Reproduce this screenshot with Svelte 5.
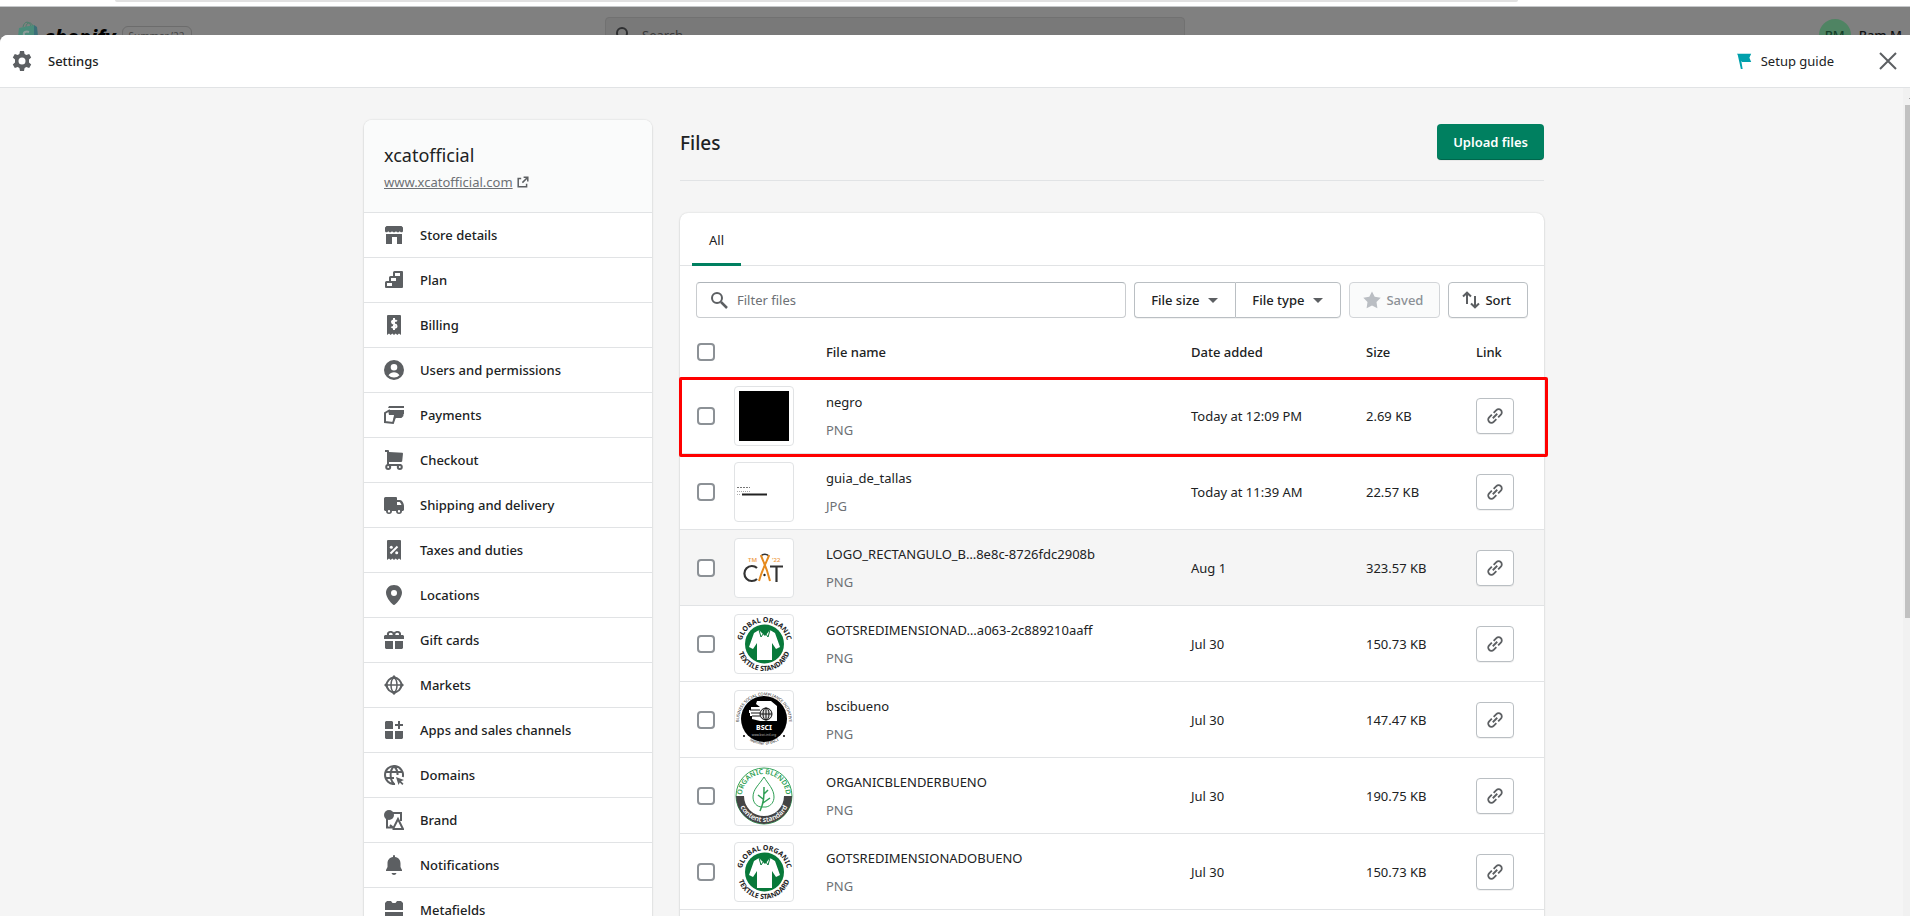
<script lang="ts">
  type NavItem = { label: string; icon: string };
  type FileRow = {
    name: string;
    type: string;
    date: string;
    size: string;
    thumb: string;
    highlighted?: boolean;
    hovered?: boolean;
  };

  const navItems: NavItem[] = [
    { label: 'Store details', icon: 'store' },
    { label: 'Plan', icon: 'plan' },
    { label: 'Billing', icon: 'billing' },
    { label: 'Users and permissions', icon: 'user' },
    { label: 'Payments', icon: 'payments' },
    { label: 'Checkout', icon: 'cart' },
    { label: 'Shipping and delivery', icon: 'truck' },
    { label: 'Taxes and duties', icon: 'taxes' },
    { label: 'Locations', icon: 'pin' },
    { label: 'Gift cards', icon: 'gift' },
    { label: 'Markets', icon: 'markets' },
    { label: 'Apps and sales channels', icon: 'apps' },
    { label: 'Domains', icon: 'domains' },
    { label: 'Brand', icon: 'brand' },
    { label: 'Notifications', icon: 'bell' },
    { label: 'Metafields', icon: 'metafields' }
  ];

  const files: FileRow[] = [
    { name: 'negro', type: 'PNG', date: 'Today at 12:09 PM', size: '2.69 KB', thumb: 'black', highlighted: true },
    { name: 'guia_de_tallas', type: 'JPG', date: 'Today at 11:39 AM', size: '22.57 KB', thumb: 'guide' },
    { name: 'LOGO_RECTANGULO_B…8e8c-8726fdc2908b', type: 'PNG', date: 'Aug 1', size: '323.57 KB', thumb: 'cat', hovered: true },
    { name: 'GOTSREDIMENSIONAD…a063-2c889210aaff', type: 'PNG', date: 'Jul 30', size: '150.73 KB', thumb: 'gots' },
    { name: 'bscibueno', type: 'PNG', date: 'Jul 30', size: '147.47 KB', thumb: 'bsci' },
    { name: 'ORGANICBLENDERBUENO', type: 'PNG', date: 'Jul 30', size: '190.75 KB', thumb: 'organic' },
    { name: 'GOTSREDIMENSIONADOBUENO', type: 'PNG', date: 'Jul 30', size: '150.73 KB', thumb: 'gots' }
  ];

  let filter = $state('');
  let selected: boolean[] = $state(files.map(() => false));
  let allSelected = $derived(selected.every(Boolean));

  function toggleAll() {
    const next = !allSelected;
    selected = files.map(() => next);
  }
</script>

{#snippet icon(name: string)}
  <svg class="icon" viewBox="0 0 20 20" aria-hidden="true">
    {#if name === 'store'}
      <path d="M2.5 1h15l1.500 1.500v3.200c0 .9-.7 1.600-1.500 1.600s-1.500-.6-1.700-1.300c-.2.700-.9 1.300-1.900 1.300s-1.700-.6-1.900-1.300c-.2.700-1 1.300-2 1.300s-1.800-.6-2-1.300c-.2.700-.9 1.300-1.900 1.300s-1.700-.6-1.900-1.300c-.2.700-.9 1.300-1.700 1.300S1 6.600 1 5.700V2.500z" />
      <path d="M2 9h16v10h-5v-7H8v7H2z" />
    {:else if name === 'plan'}
      <path fill-rule="evenodd" d="M10.500 1H18a1 1 0 0 1 1 1v15a1 1 0 0 1-1 1H2a1 1 0 0 1-1-1v-4.500a1.500 1.500 0 0 1 1.500-1.500H5V7.500A1.500 1.500 0 0 1 6.500 6H9V2.500A1.500 1.500 0 0 1 10.500 1zM11 3v3h5V3zM7 8v3h5V8zM3 13v3h5v-3z" />
    {:else if name === 'billing'}
      <path fill-rule="evenodd" d="M3 1a1 1 0 0 1 1-1h12a1 1 0 0 1 1 1v19l-2-1.500-1.700 1.500-1.600-1.500L10 20l-1.700-1.500L6.700 20 5 18.500 3 20z" />
      <path class="stroke-white" d="M12.800 6.300C12 5.300 8 4.700 8 7s4.500 1.600 4.500 4-4 2-5 .7M10 3v12" />
    {:else if name === 'user'}
      <path fill-rule="evenodd" d="M10 0a10 10 0 1 0 0 20 10 10 0 0 0 0-20zM10 4a3.300 3.300 0 1 1 0 6.600A3.300 3.300 0 0 1 10 4zM4.500 15.300C5.800 13.400 7.800 12.300 10 12.300s4.200 1.100 5.500 3A7.500 7.500 0 0 1 10 17.500a7.500 7.500 0 0 1-5.500-2.200z" />
    {:else if name === 'payments'}
      <path d="M5 1h15v2H4zM4 5h16v4l-3 3h-5l-2 4H9l1-6H5z" />
      <path class="stroke" d="M6 5 1 8v9l8 1 2-6h6l2-2" />
    {:else if name === 'cart'}
      <path d="M1 0h3a1 1 0 0 1 1 1v1l13.500.7.500.8-.8 7.700-.8.800H5v2h12v2H4a1 1 0 0 1-1-1V2H1z" />
      <circle class="stroke" cx="4.200" cy="17" r="2" />
      <circle class="stroke" cx="15.800" cy="17" r="2" />
    {:else if name === 'truck'}
      <path fill-rule="evenodd" d="M1.500 2h10.500a1 1 0 0 1 1 1v2h3c2 0 4 3.500 4 6v4l-1 1h-1a3 3 0 0 1-6 0H8a3 3 0 0 1-6 0H1l-1-1V3.500A1.500 1.500 0 0 1 1.500 2zM13 7v3h4.500C17 8.500 16 7 15.500 7zM5 15a1.200 1.200 0 1 0 0 2.400A1.200 1.200 0 0 0 5 15zm10 0a1.200 1.200 0 1 0 0 2.400 1.200 1.200 0 0 0 0-2.400z" />
    {:else if name === 'taxes'}
      <path d="M3 1a1 1 0 0 1 1-1h12a1 1 0 0 1 1 1v19l-2-1.500-1.700 1.500-1.600-1.500L10 20l-1.700-1.500L6.700 20 5 18.500 3 20z" />
      <path class="stroke-white" d="m6.500 13.500 7-7" />
      <circle class="white" cx="7.300" cy="7.300" r="1.500" />
      <circle class="white" cx="12.700" cy="12.700" r="1.500" />
    {:else if name === 'pin'}
      <path fill-rule="evenodd" d="M10 0C5.300 0 2 3.400 2 7.800 2 13 8.500 20 10 20s8-7 8-12.200C18 3.400 14.700 0 10 0zm0 5a3 3 0 1 1 0 6 3 3 0 0 1 0-6z" />
    {:else if name === 'gift'}
      <path fill-rule="evenodd" d="M3 5C2.500 2 4.500 1 6.500 1c1.500 0 2.700.5 3.500 1.500C10.800 1.500 12 1 13.500 1c2 0 4 1 3.500 4h2l1 1v3H0V6l1-1zm2 0h3.700C8.700 3.500 8 2.700 6.700 2.700S4.800 3.600 5 5zm6.300 0H15c.2-1.400-.4-2.300-1.700-2.300s-2 .8-2 2.300zM1 11h8v8H2l-1-1zm10 0h8v7l-1 1h-7z" />
    {:else if name === 'markets'}
      <path d="m10 0 3 3H7zM20 10l-3-3v6zM10 20l3-3H7zM0 10l3-3v6z" />
      <circle class="stroke" cx="10" cy="10" r="7.300" />
      <ellipse class="stroke thin" cx="10" cy="10" rx="3" ry="7" />
      <path class="stroke thin" d="M2 10h16" />
    {:else if name === 'apps'}
      <path d="M2 1h6l1 1v7H1V2zM1 11h8v8H2l-1-1zM11 11h8v7l-1 1h-7zM14 1h2v3h3v2h-3v3h-2V6h-3V4h3z" />
    {:else if name === 'domains'}
      <path class="stroke" d="M18.800 12A9 9 0 1 0 11 19M1.500 7h17M1.500 13H10M10 1C5.500 5.500 5.500 14.500 10 19M10 1c2.500 2.500 3.800 6 3.500 9" />
      <path d="m12 12 8 3-3 1.300 2.500 2.500-1.200 1.200-2.500-2.500L14.500 20z" />
    {:else if name === 'brand'}
      <circle cx="5" cy="5" r="5" />
      <path class="stroke" d="M9 3h8v8M3 9v8.500h6M8.500 19H19l-5-10-4.500 9L6 15" />
    {:else if name === 'bell'}
      <path d="M10 0a1 1 0 0 1 1 1v1c3.500.5 5.500 3 5.500 6.500V12l1.500 3v1H2v-1l1.500-3V8.500C3.500 5 5.500 2.500 9 2V1a1 1 0 0 1 1-1zM7.500 18h5c-.4 1.300-1.300 2-2.500 2s-2.100-.7-2.500-2z" />
    {:else if name === 'metafields'}
      <path d="M1 3 3 1h4l1.500 2h3L13 1h4l2 2v7H1zM1 12h18v7H1z" />
    {:else if name === 'gear'}
      <path fill-rule="evenodd" d="M8 0h4l.6 3 1.700 1 2.900-1.100 2 3.500L17 8.500v3l2.200 2.100-2 3.500-2.900-1.100-1.700 1L12 20H8l-.6-3-1.700-1-2.900 1.100-2-3.500L3 11.500v-3L.8 6.400l2-3.500L5.700 4l1.700-1zm2 6.500a3.500 3.500 0 1 0 0 7 3.500 3.500 0 0 0 0-7z" />
    {:else if name === 'flag'}
      <path d="M2 2h16l-2 4.500L18 11H8l-1-1 1.500 9h-2L3 3z" />
    {:else if name === 'close'}
      <path class="stroke" d="m2 2 16 16M18 2 2 18" />
    {:else if name === 'search'}
      <circle class="stroke" cx="8" cy="8" r="5" />
      <path class="stroke bold" d="m12 12 6 6" />
    {:else if name === 'external'}
      <path class="stroke bold" d="M7 4H2v14h14v-5M11 2h7v7M18 2 9 11" />
    {:else if name === 'caret'}
      <path d="M5 8h10l-5 5z" />
    {:else if name === 'star'}
      <path d="m10 1.500 2.700 5.300 6 1-4.200 4.300.9 6.200L10 15.500l-5.400 2.800.9-6.200L1.300 7.800l6-1z" />
    {:else if name === 'sort'}
      <path class="stroke" d="M6 14V3M2 6.500 6 2.700l4 3.800M14 6v11M10 13.500l4 3.800 4-3.800" />
    {:else if name === 'link'}
      <path class="stroke" d="m7.500 12.500 5-5M8.500 6.500l3-3a3.500 3.500 0 0 1 5 5l-3 3M11.500 13.500l-3 3a3.500 3.500 0 0 1-5-5l3-3" />
    {/if}
  </svg>
{/snippet}

{#snippet thumbnail(kind: string, id: number)}
  <svg class="art" viewBox="0 0 58 58" aria-hidden="true">
    {#if kind === 'black'}
      <rect x="4" y="4" width="50" height="50" />
    {:else if kind === 'guide'}
      <path stroke="#777" stroke-width="1" stroke-dasharray="2 1" d="M2 24.500h13" />
      <path stroke="#aaa" stroke-width="1" stroke-dasharray="1 1" d="M2 28.500h14M2 31.500h4" />
      <path stroke="#222" stroke-width="2" d="M7 31.500h25" />
    {:else if kind === 'cat'}
      <g fill="none" stroke="#333" stroke-width="2.200">
        <path d="M22 29a7.500 7.500 0 1 0 0 11M35 27.500h13M41.500 27.500V43" />
        <path d="M26 17.500c1.500-3 6.500-3 8 0" stroke-width="1.500" />
      </g>
      <path fill="none" stroke="#e58a1f" stroke-width="2" d="M26 16c1 5 5 9 9 26M34 16c-1 5-5 9-10 26" />
      <circle cx="29.500" cy="36" r="1.200" fill="#222" />
      <text x="13" y="23" font-size="6" font-weight="600" fill="#efa04d">TM</text>
      <text x="37" y="23" font-size="6" font-weight="600" fill="#efa04d">'22</text>
    {:else if kind === 'gots'}
      <path id="gots-top-{id}" fill="none" d="M7 35a23 23 0 1 1 45 0" />
      <path id="gots-bottom-{id}" fill="none" d="M2 29a27 27 0 0 0 54 0" />
      <circle cx="29.500" cy="29" r="19.500" fill="#08793a" />
      <path fill="#fff" d="m24 15-5 3-5 14 4 2 4-6v17h15V28l4 6 4-2-5-14-5-3-5 6z" />
      <path fill="none" stroke="#08793a" d="m24 15 2 7 3.500-5 3.500 5 2-7" />
      <g class="ring">
        <text><textPath href="#gots-top-{id}" startOffset="50%">GLOBAL ORGANIC</textPath></text>
        <text><textPath href="#gots-bottom-{id}" startOffset="50%">TEXTILE STANDARD</textPath></text>
      </g>
    {:else if kind === 'bsci'}
      <path id="bsci-top-{id}" fill="none" d="M8 43a25 25 0 1 1 42 0" />
      <path id="bsci-bottom-{id}" fill="none" d="M5 39a27 27 0 0 0 48 0" />
      <circle cx="29" cy="28" r="23" />
      <path fill="#fff" d="M22 10h14l6 5v15H25l-8-2v-3h-2v-3h-1v-3h2v-3h9l-4-3z" />
      <g fill="none" stroke="#111" stroke-width="1">
        <circle cx="31" cy="23" r="6" fill="#ddd" />
        <ellipse cx="31" cy="23" rx="3" ry="6" />
        <path d="M25 23h12M31 17v12M15 19h10M16 22h9M17 25h8" />
      </g>
      <text x="29" y="39" text-anchor="middle" font-size="7" font-weight="800" fill="#fff">BSCI</text>
      <text x="29" y="45" text-anchor="middle" font-size="3" fill="#bbb">www.bsci-intl.org</text>
      <g class="ring small">
        <text><textPath href="#bsci-top-{id}" startOffset="50%">BUSINESS SOCIAL COMPLIANCE INITIATIVE</textPath></text>
        <text><textPath href="#bsci-bottom-{id}" startOffset="50%">Member of BSCI</textPath></text>
      </g>
      <circle cx="9" cy="45" r="1" />
      <circle cx="49" cy="45" r="1" />
    {:else if kind === 'organic'}
      <path id="organic-top-{id}" fill="none" d="M7 29a22 22 0 0 1 44 0" />
      <path id="organic-bottom-{id}" fill="none" d="M3 29a26 26 0 0 0 52 0" />
      <circle cx="29" cy="29" r="28" fill="none" stroke="#35a35a" />
      <path fill="#444" d="M1 29a28 28 0 0 0 56 0h-8a20 20 0 0 1-40 0z" />
      <path fill="none" stroke="#2f9f55" d="M29 10c-5 8-11 12-11 20 0 6 4 10 9 10h4c5-1 8-5 8-10 0-8-6-13-10-20z" />
      <path fill="none" stroke="#2f9f55" stroke-width="1.500" d="M29 20c0 10 0 15-4 24M28 32l-5-4M28 36l7-5M29 27l4-4" />
      <g class="ring green">
        <text><textPath href="#organic-top-{id}" startOffset="50%">ORGANIC BLENDED</textPath></text>
      </g>
      <g class="ring light">
        <text><textPath href="#organic-bottom-{id}" startOffset="50%">content standard</textPath></text>
      </g>
    {/if}
  </svg>
{/snippet}

<div class="page">
  <div class="browser-edge"><div class="address-bar"></div></div>

  <div class="topbar">
    <div class="topbar-inner">
      <div class="brand">
        <svg class="bag" viewBox="0 0 22 28" aria-hidden="true">
          <path fill="none" stroke="#4b7f6c" stroke-width="1" d="M6 6c1-6 7-7 8 0M9 6c0-5 6-6 7 0" />
          <path fill="#4b8b7a" d="m2 7 15-3v22L0 24z" />
          <path fill="#3b6f78" d="m17 4 3 2 2 18-5 2z" />
          <path fill="none" stroke="#8b9b98" stroke-width="2" d="M12 11c-3-1-6 0-5 3s5 2 4 5-3 2-5 1" />
        </svg>
        <span class="wordmark">shopify</span>
        <span class="edition">Summer ’22</span>
      </div>
      <div class="topbar-search">
        {@render icon('search')}
        <span>Search</span>
      </div>
      <div class="account">
        <span class="avatar">RM</span>
        <span>Ram M</span>
      </div>
    </div>
  </div>

  <div class="modal">
    <header class="modal-header">
      {@render icon('gear')}
      <h1>Settings</h1>
      <button class="guide-button" type="button">
        {@render icon('flag')}
        Setup guide
      </button>
      <button class="close-button" type="button" aria-label="Close">
        {@render icon('close')}
      </button>
    </header>

    <div class="modal-body">
      <div class="scroll-area">
        <div class="layout">
          <nav class="sidebar">
            <div class="store">
              <h2>xcatofficial</h2>
              <a href="#store">
                <span>www.xcatofficial.com</span>
                {@render icon('external')}
              </a>
            </div>
            <ul>
              {#each navItems as item}
                <li>
                  <a href="#{item.icon}">
                    {@render icon(item.icon)}
                    {item.label}
                  </a>
                </li>
              {/each}
            </ul>
          </nav>

          <main>
            <div class="page-title">
              <h2>Files</h2>
              <button class="primary" type="button">Upload files</button>
            </div>

            <section class="card">
              <div class="tabs">
                <button class="tab" type="button">All</button>
              </div>

              <div class="toolbar">
                <label class="filter">
                  {@render icon('search')}
                  <input type="text" placeholder="Filter files" aria-label="Filter files" bind:value={filter} />
                </label>
                <div class="group">
                  <button class="control" type="button">File size {@render icon('caret')}</button>
                  <button class="control" type="button">File type {@render icon('caret')}</button>
                </div>
                <button class="control saved" type="button" disabled>{@render icon('star')} Saved</button>
                <button class="control sort" type="button">{@render icon('sort')} Sort</button>
              </div>

              <table>
                <colgroup>
                  <col class="col-check" />
                  <col class="col-thumb" />
                  <col />
                  <col class="col-date" />
                  <col class="col-size" />
                  <col class="col-link" />
                </colgroup>
                <thead>
                  <tr>
                    <th class="check">
                      <input type="checkbox" aria-label="Select all files" checked={allSelected} onchange={toggleAll} />
                    </th>
                    <th></th>
                    <th>File name</th>
                    <th>Date added</th>
                    <th>Size</th>
                    <th>Link</th>
                  </tr>
                </thead>
                <tbody>
                  {#each files as file, i}
                    <tr class:highlighted={file.highlighted} class:hovered={file.hovered}>
                      <td class="check">
                        <input type="checkbox" aria-label="Select {file.name}" bind:checked={selected[i]} />
                      </td>
                      <td><div class="thumb">{@render thumbnail(file.thumb, i)}</div></td>
                      <td>
                        <div class="name">{file.name}</div>
                        <div class="type">{file.type}</div>
                      </td>
                      <td>{file.date}</td>
                      <td>{file.size}</td>
                      <td>
                        <button class="link-button" type="button" aria-label="Copy link">
                          {@render icon('link')}
                        </button>
                      </td>
                    </tr>
                  {/each}
                </tbody>
              </table>
            </section>
          </main>
        </div>
      </div>

      <div class="scrollbar">
        <div class="arrow"></div>
        <div class="track-thumb"></div>
      </div>
    </div>
  </div>
</div>

<style>
  :global(body) {
    background: #808080;
  }

  .page,
  .page * {
    box-sizing: border-box;
  }

  .page {
    display: flex;
    flex-direction: column;
    height: 100vh;
    overflow: hidden;
    color: #202223;
    font-family: 'Segoe UI', 'Noto Sans', 'Open Sans', sans-serif;
    font-size: 13px;
    line-height: 20px;
  }

  h1,
  h2,
  ul {
    margin: 0;
    padding: 0;
  }

  button,
  input {
    font: inherit;
    color: inherit;
    margin: 0;
  }

  button {
    cursor: pointer;
  }

  a {
    color: inherit;
    text-decoration: none;
  }

  .icon {
    width: 20px;
    height: 20px;
    flex: none;
    display: block;
    fill: #5c5f62;
  }

  .stroke {
    fill: none;
    stroke: #5c5f62;
    stroke-width: 2;
  }

  .stroke.thin {
    stroke-width: 1.5;
  }

  .stroke.bold {
    stroke-width: 2.5;
  }

  .stroke-white {
    fill: none;
    stroke: #fff;
    stroke-width: 2;
  }

  .white {
    fill: #fff;
  }

  /* Dimmed admin behind the modal */
  .browser-edge {
    height: 7px;
    flex: none;
    padding: 0 392px 0 115px;
    background: #fff;
    border-bottom: 1px solid #c6c8ca;
  }

  .address-bar {
    height: 2px;
    background: #e1e1e1;
    border-radius: 0 0 8px 8px;
  }

  .topbar {
    height: 28px;
    flex: none;
    overflow: hidden;
    background: #808080;
  }

  .topbar-inner {
    display: grid;
    grid-template-columns: 588px 580px 1fr;
    align-items: center;
    height: 56px;
    padding: 0 8px 0 17px;
  }

  .brand {
    display: flex;
    align-items: center;
    gap: 6px;
  }

  .bag {
    width: 22px;
    height: 28px;
  }

  .wordmark {
    padding-top: 4px;
    color: #000;
    font-size: 20px;
    font-style: italic;
    font-weight: 800;
    line-height: 20px;
  }

  .edition {
    margin-top: 2px;
    padding: 0 6px;
    border: 1px solid #6c6c6c;
    border-radius: 6px;
    color: #454545;
    font-size: 10px;
    line-height: 18px;
  }

  .topbar-search {
    display: flex;
    align-items: center;
    gap: 8px;
    height: 36px;
    padding: 0 8px;
    background: #797979;
    border: 1px solid #717171;
    border-radius: 4px;
    color: #393a3b;
  }

  .topbar-search .stroke {
    stroke: #2e2f31;
  }

  .account {
    display: flex;
    align-items: center;
    justify-content: flex-end;
    gap: 8px;
    color: #101112;
    font-weight: 500;
  }

  .avatar {
    width: 32px;
    height: 32px;
    border-radius: 50%;
    background: #4f8463;
    color: #15402a;
    line-height: 32px;
    text-align: center;
  }

  .modal {
    display: flex;
    flex: 1;
    flex-direction: column;
    min-height: 0;
    background: #f5f5f5;
    border-radius: 8px 0 0 0;
    overflow: hidden;
  }

  .modal-header {
    display: flex;
    align-items: center;
    height: 53px;
    flex: none;
    padding: 0 12px;
    background: #fff;
    border-bottom: 1px solid #e1e3e5;
  }

  .modal-header h1 {
    flex: 1;
    margin-left: 16px;
    font-size: 13px;
    font-weight: 500;
  }

  .modal-header button {
    display: flex;
    align-items: center;
    padding: 0;
    background: none;
    border: 0;
  }

  .guide-button {
    gap: 8px;
    margin-right: 44px;
  }

  .guide-button .icon {
    width: 18px;
    height: 18px;
    fill: #00a0ac;
  }

  .modal-body {
    display: flex;
    flex: 1;
    min-height: 0;
  }

  .scroll-area {
    flex: 1;
    overflow: hidden;
    padding: 32px 32px 32px 37px;
  }

  .layout {
    display: grid;
    grid-template-columns: 288px 1fr;
    gap: 28px;
    max-width: 1180px;
    margin: 0 auto;
  }

  .sidebar,
  .card {
    background: #fff;
    border-radius: 8px;
    box-shadow: 0 0 2px rgba(23, 24, 24, 0.15), 0 1px 2px rgba(0, 0, 0, 0.12);
  }

  .store {
    height: 92px;
    padding: 20px 20px 0;
    background: #fafbfb;
    border-radius: 8px 8px 0 0;
  }

  .store h2 {
    font-size: 18px;
    font-weight: 400;
    line-height: 30px;
  }

  .store a {
    display: flex;
    align-items: center;
    gap: 4px;
    color: #6d7175;
    line-height: 24px;
  }

  .store a span {
    text-decoration: underline;
  }

  .store .icon {
    width: 12px;
    height: 12px;
  }

  .sidebar ul {
    list-style: none;
  }

  .sidebar li a {
    display: flex;
    align-items: center;
    gap: 16px;
    height: 45px;
    padding: 0 20px;
    border-top: 1px solid #e1e3e5;
    font-weight: 500;
  }

  .page-title {
    display: flex;
    align-items: flex-start;
    justify-content: space-between;
    padding: 4px 0 18px;
    border-bottom: 1px solid #e1e3e5;
    margin-bottom: 32px;
  }

  .page-title h2 {
    font-size: 19px;
    font-weight: 500;
    line-height: 38px;
  }

  .primary {
    height: 36px;
    padding: 0 16px;
    background: #008060;
    border: 0;
    border-radius: 4px;
    box-shadow: inset 0 -1px 0 rgba(0, 0, 0, 0.2), 0 1px 0 rgba(0, 0, 0, 0.05);
    color: #fff;
    font-weight: 600;
  }

  .card {
    min-height: calc(100% - 93px);
  }

  .tabs {
    height: 53px;
    padding: 0 12px;
    border-bottom: 1px solid #e1e3e5;
  }

  .tab {
    height: 53px;
    padding: 1px 17px 0;
    background: linear-gradient(#008060, #008060) bottom / 100% 3px no-repeat;
    border: 0;
    border-radius: 2px 2px 0 0;
  }

  .toolbar {
    display: flex;
    gap: 8px;
    padding: 16px 16px 8px;
  }

  .filter {
    display: flex;
    flex: 1;
    align-items: center;
    gap: 8px;
    height: 36px;
    padding: 0 12px;
    border: 1px solid #c9cccf;
    border-top-color: #aeb4b9;
    border-radius: 4px;
  }

  .filter input {
    flex: 1;
    min-width: 0;
    padding: 0;
    background: none;
    border: 0;
    outline: 0;
  }

  .filter input::placeholder {
    color: #6d7175;
    opacity: 1;
  }

  .control {
    display: flex;
    align-items: center;
    height: 36px;
    padding: 0 16px;
    gap: 4px;
    background: #fff;
    border: 1px solid #babfc3;
    border-radius: 4px;
    box-shadow: 0 1px 0 rgba(0, 0, 0, 0.05);
    font-weight: 500;
    white-space: nowrap;
  }

  .group {
    display: flex;
  }

  .group .control {
    padding-right: 12px;
  }

  .group .control:first-child {
    border-right: 0;
    border-radius: 4px 0 0 4px;
  }

  .group .control:last-child {
    border-radius: 0 4px 4px 0;
  }

  .saved,
  .sort {
    padding-left: 12px;
  }

  .control.saved {
    background: #fafbfb;
    border-color: #d2d5d8;
    box-shadow: none;
    color: #8c9196;
    cursor: default;
  }

  .saved .icon {
    fill: #babec3;
  }

  table {
    width: 100%;
    table-layout: fixed;
    border-collapse: separate;
    border-spacing: 0;
  }

  .col-check {
    width: 54px;
  }

  .col-thumb {
    width: 92px;
  }

  .col-date {
    width: 175px;
  }

  .col-size {
    width: 110px;
  }

  .col-link {
    width: 68px;
  }

  th,
  td {
    padding: 0;
    border-bottom: 1px solid #e1e3e5;
    text-align: left;
    vertical-align: middle;
    white-space: nowrap;
  }

  th {
    height: 52px;
    font-weight: 500;
  }

  td {
    height: 76px;
  }

  .check {
    padding-left: 17px;
  }

  .check input {
    appearance: none;
    display: block;
    width: 18px;
    height: 18px;
    background: #fff;
    border: 2px solid #8c9196;
    border-radius: 4px;
  }

  .check input:checked {
    background: #008060;
    border-color: #008060;
  }

  .hovered td {
    background: #f5f5f5;
  }

  .highlighted {
    position: relative;
  }

  .highlighted .check::after {
    content: '';
    position: absolute;
    inset: -1px -4px -3px -1px;
    border: 3px solid #f00;
    border-radius: 2px;
    pointer-events: none;
  }

  .thumb {
    width: 60px;
    height: 60px;
    background: #fff;
    border: 1px solid #e1e3e5;
    border-radius: 4px;
    overflow: hidden;
  }

  .art {
    display: block;
    width: 58px;
    height: 58px;
  }

  .ring {
    fill: #222;
    font-size: 7px;
    font-weight: 700;
    text-anchor: middle;
  }

  .ring.small {
    font-size: 4px;
    font-weight: 400;
  }

  .ring.green {
    fill: #2f9f55;
    font-weight: 600;
  }

  .ring.light {
    fill: #fff;
    font-weight: 600;
  }

  .name {
    margin-bottom: 8px;
  }

  .type {
    color: #6d7175;
  }

  .link-button {
    display: flex;
    align-items: center;
    justify-content: center;
    width: 38px;
    height: 36px;
    padding: 0;
    background: #fff;
    border: 1px solid #babfc3;
    border-radius: 4px;
    box-shadow: 0 1px 0 rgba(0, 0, 0, 0.05);
  }

  .link-button .icon {
    width: 18px;
    height: 18px;
  }

  .scrollbar {
    width: 7px;
    flex: none;
    overflow: hidden;
    background: #f1f1f1;
  }

  .arrow {
    width: 10px;
    height: 17px;
    margin-left: 5px;
    background: linear-gradient(135deg, transparent 50%, #a3a3a3 50%) 0 8px / 3px 3px no-repeat;
  }

  .track-thumb {
    height: 62%;
    margin-left: 2px;
    background: #c1c1c1;
  }
</style>
